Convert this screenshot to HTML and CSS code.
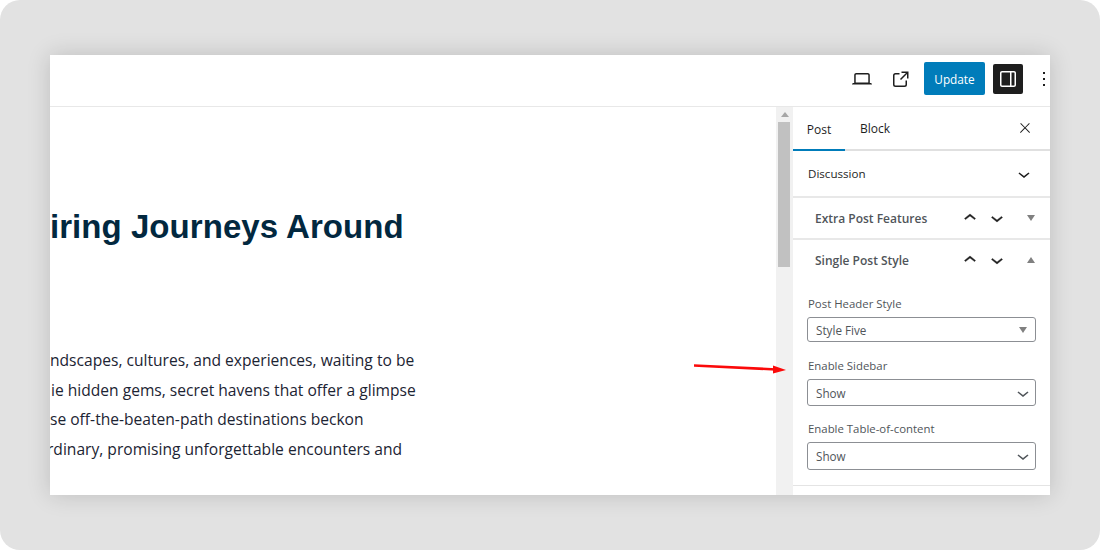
FILE: index.html
```html
<!DOCTYPE html>
<html lang="en">
<head>
    <meta charset="UTF-8">
    <title>Post editor</title>
    <link rel="stylesheet" href="styles.css">
</head>
<body>

    <div class="editor">

        <!-- Top bar -->
        <header class="topbar">
            <button class="icon-btn device-btn" aria-label="Preview">
                <svg width="24" height="24" viewBox="0 0 24 24"><path d="M20.500 16h-.7V8c0-1.100-.9-2-2-2H6.200c-1.100 0-2 .9-2 2v8h-.7c-.8 0-1.500.7-1.500 1.500h20c0-.8-.7-1.500-1.500-1.500zM5.700 8c0-.3.2-.5.5-.5h11.600c.3 0 .5.2.5.5v7.600H5.700V8z"/></svg>
            </button>
            <button class="icon-btn view-btn" aria-label="View post">
                <svg width="24" height="24" viewBox="0 0 24 24"><path d="M19.500 4.500h-7V6h4.440l-5.970 6.010 1.060 1.060L18 7.070v4.430h1.500v-7zM6.500 6A2.500 2.500 0 0 0 4 8.500v9A2.500 2.500 0 0 0 6.500 20h9a2.500 2.500 0 0 0 2.500-2.500v-4h-1.500v4a1 1 0 0 1-1 1h-9a1 1 0 0 1-1-1v-9a1 1 0 0 1 1-1h4V6h-4z"/></svg>
            </button>
            <button class="update-btn">Update</button>
            <button class="icon-btn sidebar-btn" aria-label="Settings">
                <svg width="24" height="24" viewBox="0 0 24 24"><path d="M18 4H6c-1.100 0-2 .9-2 2v12c0 1.100.9 2 2 2h12c1.100 0 2-.9 2-2V6c0-1.100-.9-2-2-2zM5.500 18V6c0-.3.2-.5.5-.5h8v13H6c-.3 0-.5-.2-.5-.5zm13 0c0 .3-.2.500-.5.500h-2.500v-13H18c.3 0 .5.200.5.500v12z"/></svg>
            </button>
            <button class="icon-btn more-btn" aria-label="Options">
                <svg width="24" height="24" viewBox="0 0 24 24"><path d="M13 19h-2v-2h2v2zm0-6h-2v-2h2v2zm0-6h-2V5h2v2z"/></svg>
            </button>
        </header>

        <div class="workspace">

            <!-- Post canvas -->
            <main class="canvas">
                <h1 class="post-title">iring Journeys Around</h1>
                <p class="post-text">
                    <span class="line">ndscapes, cultures, and experiences, waiting to be</span>
                    <span class="line line-lie">ie hidden gems, secret havens that offer a glimpse</span>
                    <span class="line">se off-the-beaten-path destinations beckon</span>
                    <span class="line line-ord">rdinary, promising unforgettable encounters and</span>
                </p>
            </main>

            <div class="scrollbar">
                <span class="scroll-up"></span>
                <span class="scroll-thumb"></span>
            </div>

            <!-- Settings sidebar -->
            <aside class="sidebar">
                <div class="tabs">
                    <span class="tab active">Post</span>
                    <span class="tab">Block</span>
                    <svg class="close-icon" width="16" height="16" viewBox="0 0 24 24"><path d="M13 11.800l6.100-6.300-1-1-6.100 6.200-6.100-6.200-1 1 6.100 6.300-6.500 6.700 1 1 6.500-6.600 6.500 6.600 1-1z"/></svg>
                </div>

                <div class="panel discussion">
                    <span class="panel-title">Discussion</span>
                    <svg class="chevron" width="24" height="24" viewBox="0 0 24 24"><path d="M17.500 11.600L12 16l-5.500-4.400.9-1.200L12 14l4.500-3.600 1 1.200z"/></svg>
                </div>

                <div class="panel meta-box">
                    <span class="panel-title">Extra Post Features</span>
                    <div class="order-btns">
                        <svg width="24" height="24" viewBox="0 0 24 24"><path d="M6.500 12.400L12 8l5.500 4.400-.9 1.200L12 10l-4.500 3.600-1-1.200z"/></svg>
                        <svg width="24" height="24" viewBox="0 0 24 24"><path d="M17.500 11.600L12 16l-5.500-4.400.9-1.200L12 14l4.500-3.600 1 1.200z"/></svg>
                    </div>
                    <span class="caret caret-down"></span>
                </div>

                <div class="panel meta-box open">
                    <span class="panel-title">Single Post Style</span>
                    <div class="order-btns">
                        <svg width="24" height="24" viewBox="0 0 24 24"><path d="M6.500 12.400L12 8l5.500 4.400-.9 1.200L12 10l-4.500 3.600-1-1.200z"/></svg>
                        <svg width="24" height="24" viewBox="0 0 24 24"><path d="M17.500 11.600L12 16l-5.500-4.400.9-1.200L12 14l4.500-3.600 1 1.200z"/></svg>
                    </div>
                    <span class="caret caret-up"></span>
                </div>

                <div class="fields">
                    <div class="field">
                        <label>Post Header Style</label>
                        <div class="select">Style Five<span class="caret caret-down"></span></div>
                    </div>
                    <div class="field">
                        <label>Enable Sidebar</label>
                        <div class="select tall">Show
                            <svg width="24" height="24" viewBox="0 0 24 24"><path d="M17.500 11.600L12 16l-5.500-4.400.9-1.200L12 14l4.500-3.600 1 1.200z"/></svg>
                        </div>
                    </div>
                    <div class="field field-last">
                        <label>Enable Table-of-content</label>
                        <div class="select tall">Show
                            <svg width="24" height="24" viewBox="0 0 24 24"><path d="M17.500 11.600L12 16l-5.500-4.400.9-1.200L12 14l4.500-3.600 1 1.200z"/></svg>
                        </div>
                    </div>
                </div>
            </aside>
        </div>

        <!-- Annotation -->
        <svg class="red-arrow" width="100" height="14" viewBox="0 0 100 14">
            <path d="M0 3.500L82 7.500" stroke="#fb0a0a" stroke-width="2.600" fill="none"/>
            <path d="M92 8L79 3.500L79 11.500Z" fill="#fb0a0a"/>
        </svg>
    </div>

</body>
</html>
```

FILE: styles.css
```css
/* General Styles */
html, body {
    margin: 0;
    padding: 0;
    height: 100%;
    background: #fff;
    overflow: hidden;
}

body {
    width: 1100px;
    height: 550px;
    box-sizing: border-box;
    padding: 55px 50px;
    background: #e2e2e2;
    border-radius: 20px;
    font-family: "Open Sans", sans-serif;
    color: #1e1e1e;
}

.editor {
    position: relative;
    height: 440px;
    background: #fff;
    display: flex;
    flex-direction: column;
    box-shadow: 0 0 22px rgba(0, 0, 0, 0.16);
}

button {
    border: none;
    background: none;
    padding: 0;
    font-family: inherit;
}

svg {
    display: block;
    fill: currentColor;
}

/* Top bar */
.topbar {
    height: 47px;
    padding-bottom: 4px;
    flex: none;
    display: flex;
    align-items: center;
    justify-content: flex-end;
    border-bottom: 1px solid #e8e8e8;
    overflow: hidden;
}

.icon-btn {
    width: 24px;
    height: 24px;
    color: #1e1e1e;
}

.view-btn {
    margin-left: 15px;
}

.update-btn {
    width: 61px;
    height: 33px;
    margin-left: 11px;
    background: #007cba;
    color: #fff;
    font-size: 11.800px;
    border-radius: 2px;
}

.sidebar-btn {
    width: 30px;
    height: 30px;
    margin-left: 8px;
    display: flex;
    align-items: center;
    justify-content: center;
    background: #1e1e1e;
    color: #fff;
    border-radius: 2px;
}

.more-btn {
    margin-left: 9px;
    margin-right: -6px;
    flex: none;
}

.workspace {
    flex: 1;
    display: flex;
    min-height: 0;
}

/* Post canvas */
.canvas {
    width: 726px;
    flex: none;
    overflow: hidden;
    background: #fff;
}

.post-title {
    margin: 101px 0 0;
    font-family: "Liberation Sans", sans-serif;
    font-size: 33px;
    line-height: 38px;
    font-weight: 700;
    letter-spacing: 0.05px;
    color: #02283f;
    white-space: nowrap;
}

.post-text {
    margin: 100px 0 0;
    font-size: 15.600px;
    line-height: 29.600px;
    color: #1c2433;
}

.line {
    display: block;
    white-space: nowrap;
}

.line-lie {
    margin-left: 1px;
}

.line-ord {
    margin-left: -3px;
}

/* Scrollbar */
.scrollbar {
    width: 17px;
    flex: none;
    background: #f1f1f1;
    display: flex;
    flex-direction: column;
    align-items: center;
}

.scroll-up {
    margin-top: 5px;
    border-left: 4px solid transparent;
    border-right: 4px solid transparent;
    border-bottom: 5px solid #a6a6a6;
}

.scroll-thumb {
    width: 12px;
    height: 145px;
    margin-top: 5px;
    margin-right: 1px;
    background: #c1c1c1;
}

/* Settings sidebar */
.sidebar {
    flex: 1;
    min-width: 0;
    background: #fff;
    font-size: 12px;
    overflow: hidden;
}

.tabs {
    height: 42px;
    display: flex;
    align-items: center;
    border-bottom: 2px solid #e0e0e0;
}

.tab {
    width: 52px;
    height: 44px;
    box-sizing: border-box;
    padding-top: 1px;
    line-height: 44px;
    text-align: center;
    color: #1e1e1e;
}

.tab.active {
    border-bottom: 2px solid #007cba;
    margin-bottom: -2px;
}

.tab + .tab {
    margin-left: 4px;
}

.close-icon {
    margin-left: auto;
    margin-right: 17px;
}

.panel {
    display: flex;
    align-items: center;
    border-bottom: 2px solid #e8e8e8;
}

.meta-box svg {
    stroke: currentColor;
    stroke-width: 0.400;
}

.discussion {
    height: 45px;
    padding: 0 14px 0 15px;
    justify-content: space-between;
}

.discussion .panel-title {
    font-weight: 500;
    font-size: 11.600px;
    color: #1e1e1e;
}

.meta-box {
    height: 40px;
    padding-left: 22px;
    padding-right: 15px;
}

.meta-box.open {
    border-bottom: none;
}

.panel-title {
    font-weight: 600;
    color: #50555a;
}

.order-btns {
    display: flex;
    gap: 3px;
    margin-left: auto;
    margin-right: 18px;
}

.caret {
    display: block;
    width: 0;
    height: 0;
    border-left: 4px solid transparent;
    border-right: 4px solid transparent;
}

.caret-down {
    border-top: 6px solid #808080;
}

.caret-up {
    border-bottom: 6px solid #808080;
}

.fields {
    padding: 15px 14px 15px 14px;
    border-bottom: 1px solid #e4e4e4;
}

.field + .field {
    margin-top: 15px;
}

.field-last.field {
    margin-top: 14px;
}

.field label {
    display: block;
    margin-bottom: 5px;
    padding-left: 1px;
    font-size: 11.400px;
    line-height: 17px;
    color: #50555a;
}

.select {
    height: 25px;
    box-sizing: border-box;
    padding: 0 8px;
    display: flex;
    align-items: center;
    justify-content: space-between;
    border: 1px solid #8c8f94;
    border-radius: 3px;
    color: #50555a;
    font-size: 11.700px;
}

.select.tall {
    height: 27px;
    padding-right: 0;
}

.field-last .select {
    height: 28px;
}

/* Annotation */
.red-arrow {
    position: absolute;
    left: 644px;
    top: 307px;
}
```
